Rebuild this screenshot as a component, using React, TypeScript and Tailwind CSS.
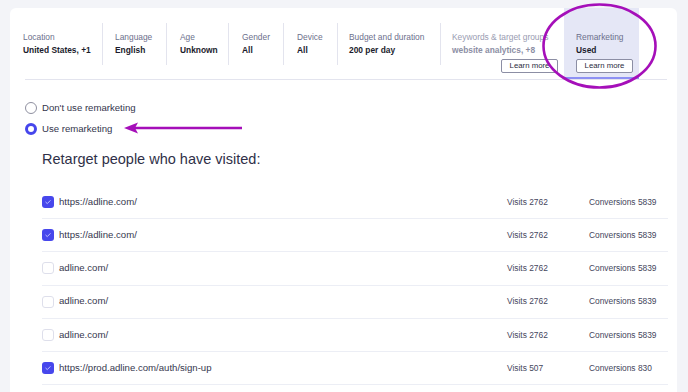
import React from "react";

type Tab = {
  label: string;
  value: string;
  width: string;
  sep?: boolean;
  muted?: boolean;
  button?: "right" | "left";
  active?: boolean;
};

const tabs: Tab[] = [
  { label: "Location", value: "United States, +1", width: "w-[93px] pl-[13px]", sep: true },
  { label: "Language", value: "English", width: "w-[64px] pl-[12px]", sep: true },
  { label: "Age", value: "Unknown", width: "w-[62px] pl-[13px]", sep: true },
  { label: "Gender", value: "All", width: "w-[55px] pl-[13px]", sep: true },
  { label: "Device", value: "All", width: "w-[54px] pl-[13px]", sep: true },
  { label: "Budget and duration", value: "200 per day", width: "w-[103px] pl-[11px]", sep: true },
  { label: "Keywords & target groups", value: "website analytics, +8", width: "w-[123px] pl-[11px] pr-[6px]", muted: true, button: "right" },
  { label: "Remarketing", value: "Used", width: "w-[75px] pl-[12px] pr-[6px]", button: "left", active: true },
];

const rows = [
  { url: "https://adline.com/", checked: true, visits: 2762, conv: 5839 },
  { url: "https://adline.com/", checked: true, visits: 2762, conv: 5839 },
  { url: "adline.com/", checked: false, visits: 2762, conv: 5839 },
  { url: "adline.com/", checked: false, visits: 2762, conv: 5839 },
  { url: "adline.com/", checked: false, visits: 2762, conv: 5839 },
  { url: "https://prod.adline.com/auth/sign-up", checked: true, visits: 507, conv: 830 },
];

function TabItem({ tab }: { tab: Tab }) {
  return (
    <div
      className={`${tab.active ? "bg-[#e5e7f6] border-b-2 border-[#8d90f3]" : ""} flex h-full shrink-0 flex-col pt-[15px] ${tab.width}`}
    >
      <div className={`h-[42px] pt-[8px] ${tab.sep ? "border-r border-[#e3e4ee]" : ""}`}>
        <div className={`whitespace-nowrap text-[8.4px] leading-[12px] ${tab.muted ? "text-[#9a9cb2]" : "text-[#6c6f8c]"}`}>
          {tab.label}
        </div>
        <div className={`mt-[1px] whitespace-nowrap text-[8.4px] font-bold leading-[12px] ${tab.muted ? "text-[#8d8fa5]" : "text-[#1b1c2c]"}`}>
          {tab.value}
        </div>
      </div>
      {tab.button && (
        <div className={`-mt-[6px] flex ${tab.button === "right" ? "justify-end" : "justify-start"}`}>
          <button className="h-[14px] w-[57px] rounded-[2px] border border-[#8c8ea4] bg-white text-[7.8px] leading-[12px] text-[#2a2b3d]">
            Learn more
          </button>
        </div>
      )}
    </div>
  );
}

function Checkbox({ checked }: { checked: boolean }) {
  if (checked) {
    return (
      <div className="flex h-[12px] w-[12px] items-center justify-center rounded-[3px] bg-[#4747ec]">
        <svg width="8" height="8" viewBox="0 0 8 8" fill="none">
          <path d="M1.8 4.2 L3.3 5.6 L6.2 2.6" stroke="#c9cbff" strokeWidth="0.9" strokeLinecap="round" strokeLinejoin="round" />
        </svg>
      </div>
    );
  }
  return <div className="h-[12px] w-[12px] rounded-[3px] border border-[#dedfeb] bg-white" />;
}

export default function App() {
  return (
    <div className="relative h-[392px] w-full overflow-hidden bg-[#f3f4f8] font-['Liberation_Sans',Arial,sans-serif]">
      <div className="ml-[10px] mt-[8px] h-[384px] w-[667px] rounded-t-[6px] bg-white">
        {/* summary tabs */}
        <div className="flex h-[71px]">
          {tabs.map((t) => (
            <TabItem key={t.label} tab={t} />
          ))}
        </div>
        <div className="ml-[15px] mr-[10px] h-px bg-[#e3e4ee]" />

        {/* remarketing choice */}
        <div className="ml-[15px] mt-[22px] flex flex-col gap-[9px]">
          <label className="flex h-[12px] items-center gap-[5px]">
            <span className="h-[12px] w-[12px] rounded-full border border-[#8f90a0] bg-white" />
            <span className="text-[9.6px] text-[#34354c]">Don&apos;t use remarketing</span>
          </label>
          <label className="flex h-[12px] items-center gap-[5px]">
            <span className="h-[12px] w-[12px] rounded-full border-[3.5px] border-[#4646ec] bg-white" />
            <span className="text-[9.6px] text-[#34354c]">Use remarketing</span>
          </label>
        </div>

        <h2 className="ml-[32px] mt-[14px] text-[14.5px] leading-[20px] text-[#2f3048]">
          Retarget people who have visited:
        </h2>

        <div className="ml-[32px] mt-[17px] w-[626px]">
          {rows.map((r, i) => (
            <div key={i} className="flex h-[33.2px] items-center border-b border-[#eceef5]">
              <Checkbox checked={r.checked} />
              <span className="ml-[5px] w-[448px] text-[9.6px] text-[#36374e]">{r.url}</span>
              <span className="w-[82px] text-[8.4px] text-[#45465c]">Visits {r.visits}</span>
              <span className="text-[8.4px] text-[#45465c]">Conversions {r.conv}</span>
            </div>
          ))}
        </div>
      </div>

      {/* annotations */}
      <svg className="pointer-events-none absolute left-0 top-0" width="688" height="392" viewBox="0 0 688 392">
        <ellipse cx="599.5" cy="46" rx="56" ry="41.5" fill="none" stroke="#a50fb9" strokeWidth="2.6" />
        <line x1="134" y1="128" x2="242" y2="128" stroke="#a50fb9" strokeWidth="2.4" />
        <path d="M124 128 L138 122.5 L135 128 L138 133.5 Z" fill="#a50fb9" />
      </svg>
    </div>
  );
}
